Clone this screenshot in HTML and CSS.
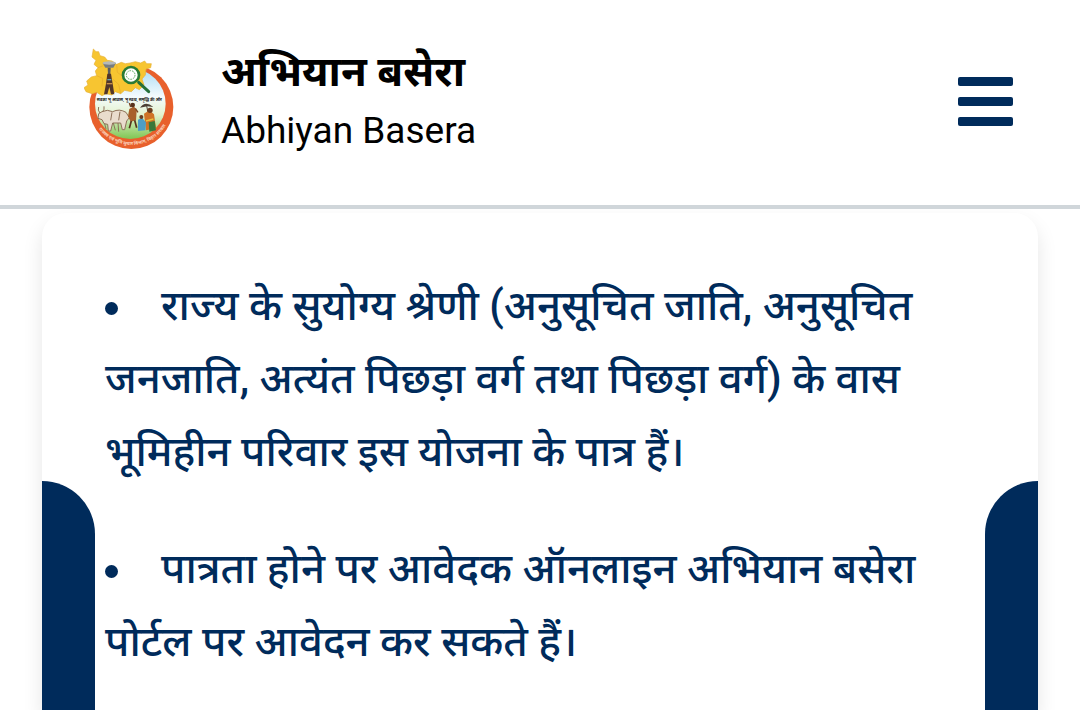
FILE: index.html
```
<!DOCTYPE html>
<html lang="hi">
<head>
  <meta charset="UTF-8" />
  <meta name="viewport" content="width=device-width, initial-scale=1.0"/>
  <title>अभियान बसेरा | Abhiyan Basera</title>
  <link rel="stylesheet" href="styles.css">
</head>
<body>

  <header>
    <a href="#" class="brand">
      <svg class="logo" viewBox="42 36 270 312" role="img" aria-label="अभियान बसेरा">
        <defs>
          <linearGradient id="field" x1="0" y1="0" x2="0" y2="1">
            <stop offset="0" stop-color="#a9dbf5"/>
            <stop offset="0.4" stop-color="#f4fbfd"/>
            <stop offset="0.65" stop-color="#e4f3d0"/>
            <stop offset="1" stop-color="#7fc653"/>
          </linearGradient>
          <path id="ring" d="M74 262 A122 122 0 0 0 298 250"/>
        </defs>
        <!-- ring -->
        <circle cx="184" cy="216" r="126" fill="#e8602c"/>
        <circle cx="181" cy="206" r="106" fill="url(#field)"/>
        <!-- bullocks -->
        <g fill="#e9dccd" stroke="#8d7058" stroke-width="3">
          <path d="M86 236 L96 230 Q112 222 128 230 Q148 220 168 232 L178 248 L170 258 L164 284 H157 L152 264 L128 264 L122 288 H115 L113 268 L102 266 L96 254 L84 250 Z"/>
          <path d="M90 234 Q82 226 86 216 M98 230 Q104 224 102 214 M130 264 L136 286 M144 264 L146 290 M104 266 L108 282 M126 232 L122 256 M150 230 L146 256" fill="none"/>
        </g>
        <!-- farmers -->
        <g fill="#a8602c">
          <path d="M178 222 l14 -8 8 14 -2 28 -16 4 -8 -16z"/>
          <path d="M182 216 l-4 -12 M196 220 l8 12" stroke="#7a4423" stroke-width="4"/>
          <circle cx="188" cy="210" r="7" fill="#57331c"/>
          <path d="M210 218 Q226 196 250 216 L232 214 Z" fill="#4c4035"/>
          <path d="M230 212 L236 244" stroke="#4c4035" stroke-width="3"/>
          <path d="M222 236 l16 -10 14 12 6 42 -30 6z" fill="#cf7325"/>
          <circle cx="240" cy="226" r="8" fill="#6b3d1f"/>
          <path d="M204 254 l12 -6 12 14 -2 24 -22 2z" fill="#4d9ec4"/>
          <circle cx="214" cy="246" r="6" fill="#6b3d1f"/>
          <path d="M236 262 l18 -4 4 28 -20 4z" fill="#39783a"/>
          <path d="M228 258 l22 -6" stroke="#e9c23c" stroke-width="5"/>
          <path d="M184 258 l-6 22 M194 256 l6 22" stroke="#57331c" stroke-width="5"/>
        </g>
        <!-- state map -->
        <path d="M70 42 L78 50 L86 50 L90 62 L104 66 L112 76 L126 78 L140 88 L154 82 L166 86 L180 84 L196 80 L212 84 L224 78 L230 86 L244 86 L242 98 L228 102 L226 120 L216 132 L222 150 L208 164 L196 158 L184 170 L164 166 L152 176 L136 170 L126 180 L108 176 L96 182 L80 172 L66 176 L48 170 L42 158 L54 150 L50 138 L64 126 L80 122 L76 108 L84 98 L72 88 L78 76 L66 66 Z" fill="#f7c531" stroke="#e5b13a" stroke-width="2"/>
        <path d="M84 98 L100 92 M80 122 L98 130 L96 154 M140 88 L142 112 L158 124 M128 132 L146 148 L152 176" fill="none" stroke="#e6aa2c" stroke-width="2"/>
        <!-- lamp tower -->
        <path d="M98 84 H138 L130 98 H106 Z" fill="#777c80"/>
        <ellipse cx="118" cy="84" rx="20" ry="5" fill="#b5b9ba"/>
        <path d="M113 98 H122 L121 118 H114 Z" fill="#5b5c5e"/>
        <path d="M112 116 H123 L128 146 L133 178 H123 L118 156 L112 178 H102 L108 146 Z" fill="#523629"/>
        <path d="M112 134 H124" stroke="#6aa6b8" stroke-width="4"/>
        <path d="M110 146 H127" stroke="#c58d50" stroke-width="4"/>
        <!-- magnifier -->
        <path d="M206 142 L236 170" stroke="#24703a" stroke-width="9" stroke-linecap="round"/>
        <circle cx="183" cy="120" r="24" fill="#fff" stroke="#2b7b35" stroke-width="8"/>
        <circle cx="182" cy="120" r="13" fill="none" stroke="#57a45a" stroke-width="3" stroke-dasharray="5 3"/>
        <text x="178" y="198" class="logo-motto">सबका भू आवास, भू स्वत्व, समृद्धि की ओर</text>
        <text class="logo-dept"><textPath href="#ring" startOffset="50%">राजस्व एवं भूमि सुधार विभाग, बिहार सरकार</textPath></text>
      </svg>
      <span class="brand-text">
        <strong>अभियान बसेरा</strong>
        <span>Abhiyan Basera</span>
      </span>
    </a>

    <button type="button" class="menu-btn" aria-label="Menu">
      <span></span>
      <span></span>
      <span></span>
    </button>
  </header>

  <main>
    <section class="card">
      <ul>
        <li>राज्य के सुयोग्य श्रेणी (अनुसूचित जाति, अनुसूचित जनजाति, अत्यंत पिछड़ा वर्ग तथा पिछड़ा वर्ग) के वास भूमिहीन परिवार इस योजना के पात्र हैं।</li>
        <li>पात्रता होने पर आवेदक ऑनलाइन अभियान बसेरा पोर्टल पर आवेदन कर सकते हैं।</li>
      </ul>
      <button type="button" class="slide-btn prev" aria-label="Previous"></button>
      <button type="button" class="slide-btn next" aria-label="Next"></button>
    </section>
  </main>

</body>
</html>
```
FILE: styles.css
```
:root {
  --navy: #002b5b;
  --line: #d0d6da;
}

* {
  margin: 0;
  padding: 0;
  box-sizing: border-box;
  font-family: Roboto, "Noto Sans", sans-serif;
}

body {
  height: 100vh;
  display: flex;
  flex-direction: column;
  overflow: hidden;
  background-color: #fff;
  color: #000;
}

header {
  display: flex;
  justify-content: space-between;
  align-items: center;
  padding: 42px 67px 45px 84px;
  border-bottom: 4px solid var(--line);
  background-color: #fff;
  position: relative;
  z-index: 1;
}

.brand {
  display: flex;
  align-items: flex-start;
  gap: 47px;
  color: inherit;
  text-decoration: none;
}

.logo {
  width: 90px;
  height: 104px;
  margin-top: 5px;
}

.logo-motto {
  font-size: 12px;
  font-weight: bold;
  text-anchor: middle;
  fill: #111;
}

.logo-dept {
  font-size: 14px;
  font-weight: bold;
  text-anchor: middle;
  fill: #fbd3bd;
}

.brand-text {
  display: flex;
  flex-direction: column;
  font-size: 37px;
  line-height: 59px;
}

.brand-text strong {
  font-size: 42px;
}

.menu-btn {
  display: flex;
  flex-direction: column;
  gap: 11px;
  border: none;
  background: none;
  cursor: pointer;
}

.menu-btn span {
  width: 55px;
  height: 9px;
  border-radius: 2px;
  background-color: var(--navy);
}

main {
  flex: 1;
  min-height: 0;
  display: flex;
  padding: 4px 42px 0;
}

.card {
  flex: 1;
  position: relative;
  padding: 56px 63px 0;
  border-radius: 24px 24px 0 0;
  background-color: #fff;
  box-shadow: 0 10px 20px rgba(0, 0, 0, 0.1);
}

.card ul {
  list-style: none;
}

.card li {
  margin-bottom: 44px;
  font-size: 42px;
  font-weight: 500;
  line-height: 73px;
  color: var(--navy);
}

.card li::before {
  content: "";
  display: inline-block;
  width: 13px;
  height: 13px;
  margin-right: 43px;
  border-radius: 50%;
  background-color: var(--navy);
  vertical-align: 5px;
}

.slide-btn {
  position: absolute;
  top: 268px;
  bottom: 0;
  width: 53px;
  border: none;
  background-color: var(--navy);
  cursor: pointer;
}

.slide-btn.prev {
  left: 0;
  border-radius: 0 53px 0 0;
}

.slide-btn.next {
  right: 0;
  border-radius: 53px 0 0 0;
}
```
